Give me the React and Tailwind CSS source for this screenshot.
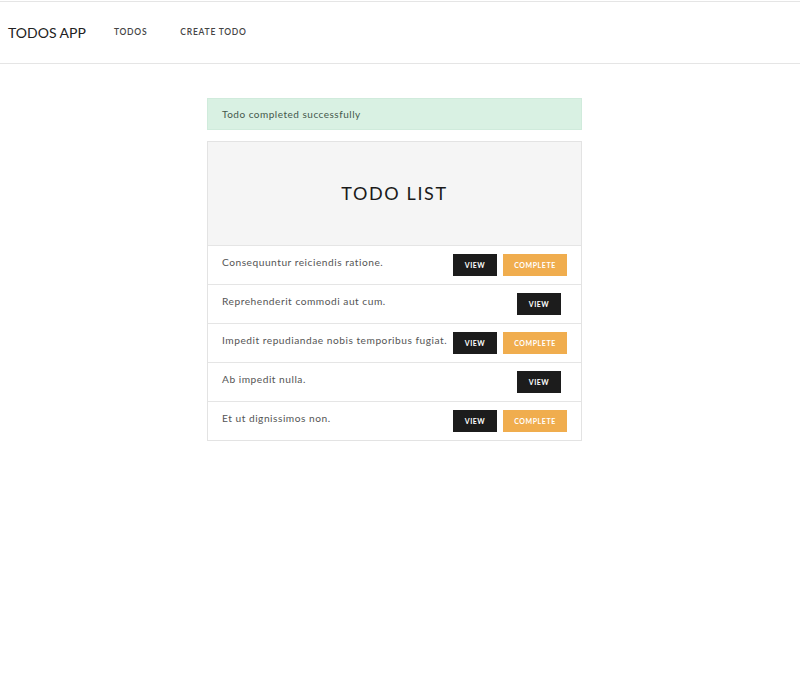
import React from "react";

const todos = [
    { title: "Consequuntur reiciendis ratione.", done: false },
    { title: "Reprehenderit commodi aut cum.", done: true },
    { title: "Impedit repudiandae nobis temporibus fugiat.", done: false },
    { title: "Ab impedit nulla.", done: true },
    { title: "Et ut dignissimos non.", done: false },
];

export default function App() {

    return (
        <div
            className="min-h-[680px] bg-white text-[#333]"
            style={{ fontFamily: "Lato, 'Noto Sans', sans-serif" }}
        >

            {/* NAVBAR */}

            <nav className="mt-px h-[63px] border-t border-b border-[#e5e5e5] flex items-center">

                <div className="pl-2 pr-[28px] text-[14px] tracking-normal text-[#222]">
                    TODOS APP
                </div>

                <a className="text-[8.5px] font-semibold tracking-[0.09em] text-[#444]">
                    TODOS
                </a>

                <a className="ml-[33px] text-[8.5px] font-semibold tracking-[0.09em] text-[#444]">
                    CREATE TODO
                </a>

            </nav>

            {/* CONTENT */}

            <div className="w-[375px] ml-[207px] mt-[34px]">

                <div className="h-[32px] bg-[#d9f1e3] border border-[#d0ebdc] flex items-center px-[14px] text-[10px] tracking-[0.05em] text-[#44584b]">
                    Todo completed successfully
                </div>

                <div className="mt-[11px] border border-[#e3e3e3]">

                    <div className="h-[103px] bg-[#f5f5f5] flex items-center justify-center">
                        <h1 className="text-[18px] tracking-[0.09em] text-[#1a1a1a]">
                            TODO LIST
                        </h1>
                    </div>

                    {todos.map((todo, i) => (

                        <div
                            key={i}
                            className="h-[39px] border-t border-[#e5e5e5] flex items-start justify-between px-[14px]"
                        >

                            <span className="pt-[9px] whitespace-nowrap text-[10.2px] tracking-[0.05em] text-[#555]">
                                {todo.title}
                            </span>

                            <div className="flex shrink-0 pt-[8px]">

                                <button className="w-[44px] h-[22px] bg-[#1c1c1c] text-white text-[7px] font-bold tracking-[0.08em] mr-[6px]">
                                    VIEW
                                </button>

                                {!todo.done && (
                                    <button className="w-[64px] h-[22px] bg-[#f0ad4e] text-white text-[7px] font-bold tracking-[0.08em]">
                                        COMPLETE
                                    </button>
                                )}

                            </div>

                        </div>

                    ))}

                </div>

            </div>

        </div>
    );
}
